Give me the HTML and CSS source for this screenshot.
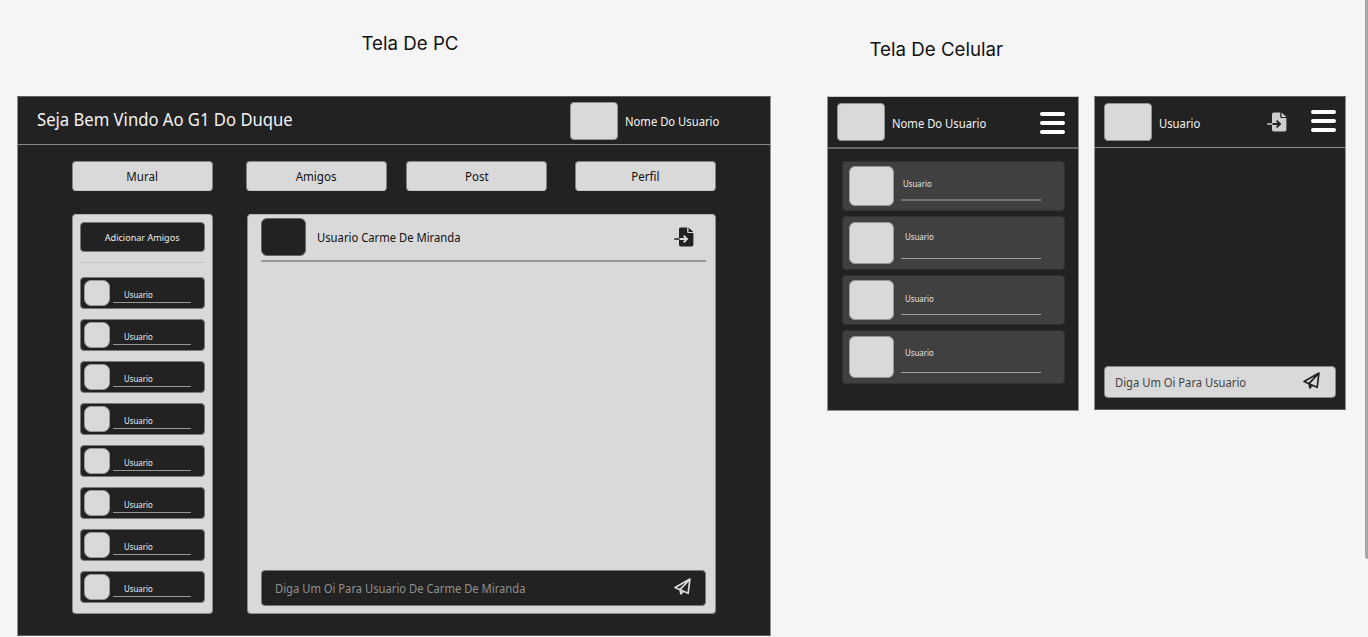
FILE: index.html
```
<!DOCTYPE html>
<html lang="pt-BR">
<head>
<meta charset="utf-8">
<title>Telas</title>
<link rel="stylesheet" href="styles.css">
</head>
<body>
<svg class="defs" width="0" height="0">
  <symbol id="import" viewBox="0 0 20 20">
    <path fill="currentColor" fill-rule="evenodd" d="M5 2.3Q5 0.5 6.8 0.5H13.2V5Q13.2 6 14.2 6H19.4V17.7Q19.4 19.5 17.6 19.5H6.8Q5 19.5 5 17.7V13H10.6L9 14.7L10.2 15.9L14.4 12L10.2 8L9 9.2L10.6 11.1H5ZM14.5 0.5L19.4 5H14.5Z"/>
    <path stroke="currentColor" stroke-width="1.7" stroke-linecap="round" d="M.9 12H5"/>
  </symbol>
  <symbol id="send" viewBox="0 0 16 16">
    <path fill="none" stroke="currentColor" stroke-width="1.6" stroke-linejoin="round" d="M15 1L1 9L5.6 11L13.3 14.4ZM15 1L5.6 11L6.5 15L8.6 12.3"/>
  </symbol>
</svg>
<main class="board">
  <section class="desktop">
    <h2 class="label label-pc">Tela De PC</h2>
    <div class="screen pc">
      <header class="pc-head">
        <h1 class="title"><span class="t">Seja Bem Vindo Ao G1 Do Duque</span></h1>
        <div class="avatar"></div>
        <span class="name t">Nome Do Usuario</span>
      </header>
      <nav class="nav">
        <button><span class="t">Mural</span></button>
        <button><span class="t">Amigos</span></button>
        <button><span class="t">Post</span></button>
        <button><span class="t">Perfil</span></button>
      </nav>
      <div class="content">
        <aside class="friends">
          <button class="add"><span class="t">Adicionar Amigos</span></button>
          <ul class="list">
            <li><i></i><p><span class="t">Usuario</span></p></li>
            <li><i></i><p><span class="t">Usuario</span></p></li>
            <li><i></i><p><span class="t">Usuario</span></p></li>
            <li><i></i><p><span class="t">Usuario</span></p></li>
            <li><i></i><p><span class="t">Usuario</span></p></li>
            <li><i></i><p><span class="t">Usuario</span></p></li>
            <li><i></i><p><span class="t">Usuario</span></p></li>
            <li><i></i><p><span class="t">Usuario</span></p></li>
          </ul>
        </aside>
        <section class="chat">
          <div class="chat-head">
            <i></i><span class="name t">Usuario Carme De Miranda</span>
            <svg class="import"><use href="#import"/></svg>
          </div>
          <div class="composer">
            <span class="t">Diga Um Oi Para Usuario De Carme De Miranda</span>
            <svg class="send"><use href="#send"/></svg>
          </div>
        </section>
      </div>
    </div>
  </section>
  <section class="mobile">
    <h2 class="label label-cel">Tela De Celular</h2>
    <div class="phones">
      <div class="screen phone phone-list">
        <header class="phone-head">
          <div class="avatar"></div><span class="name t">Nome Do Usuario</span>
          <div class="burger"><b></b><b></b><b></b></div>
        </header>
        <div class="cards">
          <div class="card c1"><i></i><p><span class="t">Usuario</span></p></div>
          <div class="card c2"><i></i><p><span class="t">Usuario</span></p></div>
          <div class="card c3"><i></i><p><span class="t">Usuario</span></p></div>
          <div class="card c4"><i></i><p><span class="t">Usuario</span></p></div>
        </div>
      </div>
      <div class="screen phone phone-chat">
        <header class="phone-head">
          <div class="avatar"></div><span class="name t">Usuario</span>
          <svg class="import"><use href="#import"/></svg>
          <div class="burger"><b></b><b></b><b></b></div>
        </header>
        <div class="composer light">
          <span class="t">Diga Um Oi Para Usuario</span>
          <svg class="send"><use href="#send"/></svg>
        </div>
      </div>
    </div>
  </section>
</main>
<div class="scroll"></div>
</body>
</html>
```
FILE: styles.css
```
* { box-sizing: border-box; margin: 0; padding: 0; }
html, body { height: 637px; overflow: hidden; }
body { background: #f5f5f5; font-family: "Noto Sans", sans-serif; }
button { border: 0; font-family: inherit; }
ul { list-style: none; }
.defs { position: absolute; }
.t { display: inline-block; white-space: nowrap; transform: scaleX(.925); transform-origin: left center; }
button .t { transform-origin: center; }
.board { display: flex; padding-left: 17px; height: 637px; }
.desktop { width: 754px; flex: none; }
.mobile { margin-left: 56px; width: 519px; flex: none; }
.label { font: 400 18.7px/24px Inter, sans-serif; color: #111; white-space: nowrap; }
.label-pc { padding: 32px 0 0 344.5px; height: 96px; }
.label-cel { padding: 38px 0 0 42.5px; height: 96px; }
.screen { background: #222; border: 1px solid #909090; border-top-color: #606060; }
.pc { height: 540px; border-bottom-color: #606060; }
.pc-head { display: flex; height: 48px; border-bottom: 1px solid #898989; padding-left: 19px; color: #f3f3f3; }
.title { font-size: 18px; font-weight: 400; line-height: 45px; width: 533px; }
.avatar { width: 48px; height: 38px; background: #d9d9d9; border: 1px solid #929292; border-radius: 4px; margin-top: 5px; flex: none; }
.name { font-size: 12.5px; transform: scaleX(.9); }
.pc-head .name { line-height: 50px; margin-left: 6.5px; }
.nav { display: flex; padding: 16px 0 0 54px; }
.nav button { width: 141px; height: 30px; background: #d9d9d9; border: 1px solid #858585; border-bottom-color: #c4c4c4; border-radius: 4px; font-size: 12.5px; line-height: 30px; color: #111; }
.nav button:nth-child(2) { margin-left: 33px; }
.nav button:nth-child(3) { margin-left: 19px; }
.nav button:nth-child(4) { margin-left: 28px; }
.content { display: flex; gap: 34px; padding: 23px 0 0 54px; }
.friends, .chat { height: 400px; background: #d9d9d9; border: 1px solid #8c8c8c; border-top-color: #b4b4b4; border-radius: 4px; }
.friends { width: 141px; padding: 7px; }
.chat { width: 469px; padding: 4px 9px 7px 13px; display: flex; flex-direction: column; justify-content: space-between; }
.add { display: block; width: 125px; height: 30px; border: 1px solid #777; border-radius: 4px; background: #222; color: #eee; font-size: 9.5px; line-height: 30px; }
.add .t { transform: scaleX(.955); }
.list { border-top: 1px solid #c2c2c2; margin-top: 10px; padding-top: 14px; display: grid; gap: 10px; }
.list li { display: flex; width: 125px; height: 32px; background: #222; border: 1px solid #777; border-radius: 4px; padding: 2px 0 0 3px; }
.list i { width: 26px; height: 26px; border-radius: 7px; background: #d9d9d9; border: 1px solid #999; }
.list p { width: 78px; height: 23px; margin-left: 3px; border-bottom: 1px solid #999; padding-left: 11px; font-size: 8.5px; line-height: 29px; color: #eee; }
.chat-head { height: 43px; border-bottom: 2px solid #999; display: flex; }
.chat-head i { width: 45px; height: 38px; border-radius: 6px; background: #222; border: 1px solid #666; margin-top: -1px; }
.chat-head .name { margin-left: 11px; line-height: 38px; color: #111; }
.chat-head .import { margin: 8px 12px 0 auto; color: #222; }
.import { width: 20px; height: 20px; display: block; }
.composer { display: flex; width: 445px; height: 36px; background: #222; border: 1px solid #777; border-radius: 4px; color: #909090; font-size: 12.5px; line-height: 35px; padding-left: 12.5px; }
.composer .t { transform: scaleX(.897); }
.send { width: 17px; height: 17px; display: block; color: #d9d9d9; margin: 7px 14px 0 auto; }
.phones { display: flex; gap: 15px; }
.phone { width: 252px; }
.phone-list { height: 315px; }
.phone-chat { height: 314px; display: flex; flex-direction: column; justify-content: space-between; border-bottom-color: #606060; }
.phone-list { border-top-color: #c8cac9; }
.phone-head { display: flex; height: 52px; border-bottom: 2px solid #666; padding: 1px 13px 0 9px; color: #f3f3f3; }
.phone-head .name { margin-left: 7px; line-height: 52px; }
.burger { margin: 14px 0 0 auto; display: grid; gap: 5px; height: 22px; }
.burger b { width: 25px; height: 4px; border-radius: 2px; background: #fff; }
.phone-chat .phone-head { padding: 1px 9px 0 9px; border-bottom: 1px solid #929292; height: 51px; }
.phone-chat .name { width: 45px; line-height: 51px; }
.phone-chat .import { color: #cecece; margin: 14px 0 0 63px; }
.phone-chat .burger { margin-top: 12px; }
.cards { padding: 12px 0 0 14px; width: 237px; }
.card { display: flex; height: 50px; background: #404040; border: 1px solid #323232; border-radius: 4px; padding: 4px 0 0 6px; }
.card i { width: 45px; height: 40px; border-radius: 6px; background: #d9d9d9; border: 1px solid #999; }
.card p { width: 140px; height: 35px; margin-left: 7px; border-bottom: 2px solid #717171; padding-left: 2px; font-size: 8.5px; line-height: 36px; color: #e5e5e5; }
.c2, .c4 { height: 54px; margin-top: 5px; }
.c3 { margin-top: 5px; }
.c2 i, .c4 i { height: 42px; margin-top: 1px; }
.card.c2 p, .card.c3 p, .card.c4 p { border-bottom: 1px solid #a0a0a0; padding-left: 4px; }
.card.c2 p { height: 38px; line-height: 31px; }
.card.c3 p { height: 35px; line-height: 37px; }
.card.c4 p { height: 38px; line-height: 36px; }
.composer.light { width: 232px; height: 32px; background: #d9d9d9; color: #444; border-color: #888; margin: 0 0 11px 9px; padding-left: 10px; line-height: 31px; }
.light .send { color: #222; margin: 5px 15px 0 auto; }
.scroll { position: absolute; right: 0; top: 0; width: 3px; height: 559px; background: #a6a6a6; border-radius: 0 0 0 3px; }
```
